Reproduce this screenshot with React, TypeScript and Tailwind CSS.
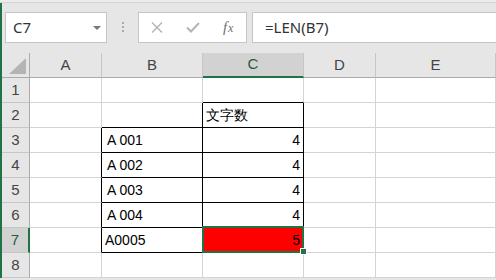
import React from 'react';

type Cell = { text?: string; align?: 'left' | 'right'; pad?: string; r?: boolean; b?: boolean; sel?: boolean };

// Rows 1..8, columns A..E
const rows: Cell[][] = [
  [{}, {}, { b: true }, {}, {}],
  [{}, { r: true, b: true }, { text: '文字数', r: true, b: true, pad: 'pl-[3px]' }, {}, {}],
  [{ r: true }, { text: 'A 001', r: true, b: true, pad: 'pl-[5px]' }, { text: '4', align: 'right', r: true, b: true }, {}, {}],
  [{ r: true }, { text: 'A 002', r: true, b: true, pad: 'pl-[5px]' }, { text: '4', align: 'right', r: true, b: true }, {}, {}],
  [{ r: true }, { text: 'A 003', r: true, b: true, pad: 'pl-[5px]' }, { text: '4', align: 'right', r: true, b: true }, {}, {}],
  [{ r: true }, { text: 'A 004', r: true, b: true, pad: 'pl-[5px]' }, { text: '4', align: 'right', r: true, b: true }, {}, {}],
  [{ r: true }, { text: 'A0005', r: true, b: true, pad: 'pl-[3px]' }, { text: '5', align: 'right', r: true, b: true, sel: true }, {}, {}],
  [{}, {}, {}, {}, {}],
];

const cols = ['A', 'B', 'C', 'D', 'E'];

function XIcon() {
  return (
    <svg width="12" height="11" viewBox="0 0 12 11">
      <path d="M1 0.5 L11 10.5 M11 0.5 L1 10.5" stroke="#b4b4b4" strokeWidth="1.4" fill="none" />
    </svg>
  );
}

function CheckIcon() {
  return (
    <svg width="14" height="11" viewBox="0 0 14 11">
      <path d="M1 5.5 L5 9.5 L13 1" stroke="#b4b4b4" strokeWidth="2" fill="none" />
    </svg>
  );
}

export default function App() {
  return (
    <div className="w-[496px] h-[280px] overflow-hidden bg-[#e6e6e6] font-['Liberation_Sans',sans-serif]">
      <div className="h-[3px] bg-[#ececec] border-b border-[#d4d4d4]" />
      <div className="border-l-2 border-[#217346]">
        {/* formula bar */}
        <div className="h-[50px] flex items-start pt-[9px]">
          <div className="ml-[3px] w-[102px] h-[31px] bg-white border border-[#c6c6c6] flex items-center justify-between pl-[7px] pr-[5px]">
            <span className="text-[15px] text-[#333] font-['Noto_Sans',sans-serif]">C7</span>
            <span className="w-0 h-0 border-l-[4px] border-r-[4px] border-t-[4px] border-l-transparent border-r-transparent border-t-[#777]" />
          </div>
          <div className="ml-[15px] mt-[10px] flex flex-col gap-[2px]">
            <span className="w-[2px] h-[2px] bg-[#aaa]" />
            <span className="w-[2px] h-[2px] bg-[#aaa]" />
            <span className="w-[2px] h-[2px] bg-[#aaa]" />
          </div>
          <div className="ml-[14px] w-[109px] h-[31px] bg-white border border-[#c6c6c6] flex items-center">
            <div className="w-[36px] flex justify-center"><XIcon /></div>
            <div className="w-[36px] flex justify-center"><CheckIcon /></div>
            <div className="w-[36px] flex justify-center">
              <span className="italic text-[15px] text-[#707070] font-['Liberation_Serif',serif] leading-none">f<span className="text-[12px] ml-[1px]">x</span></span>
            </div>
          </div>
          <div className="ml-[5px] flex-1 h-[31px] bg-white border border-r-0 border-[#c6c6c6] flex items-center pl-[12px]">
            <span className="text-[15px] text-[#333] font-['Noto_Sans',sans-serif]">=LEN(B7)</span>
          </div>
        </div>

        {/* sheet */}
        <div className="grid grid-cols-[28px_72px_101px_101px_72px_1fr] bg-white">
          {/* header row */}
          <div className="h-[25px] bg-[#e6e6e6] border-r border-b border-[#ababab] flex items-end justify-end pr-[3px] pb-[3px]">
            <svg width="17" height="16" viewBox="0 0 17 16">
              <polygon points="17,0 17,16 0,16" fill="#b4b4b4" />
            </svg>
          </div>
          {cols.map((c) =>
            c === 'C' ? (
              <div key={c} className="h-[25px] bg-[#d2d2d2] border-r border-[#c6c6c6] border-b-2 border-b-[#217346] flex items-center justify-center text-[15px] text-[#1f5e3b]">
                {c}
              </div>
            ) : (
              <div key={c} className="h-[25px] bg-[#e6e6e6] border-r border-[#c6c6c6] border-b border-b-[#ababab] flex items-center justify-center text-[15px] text-[#444]">
                {c}
              </div>
            )
          )}

          {rows.map((row, ri) => (
            <React.Fragment key={ri}>
              {ri === 6 ? (
                <div className="h-[25px] bg-[#d2d2d2] border-r-2 border-r-[#217346] border-b border-b-[#c6c6c6] flex items-center justify-center text-[15px] text-[#1f5e3b]">
                  {ri + 1}
                </div>
              ) : (
                <div className="h-[25px] bg-[#e6e6e6] border-r border-r-[#ababab] border-b border-b-[#c6c6c6] flex items-center justify-center text-[15px] text-[#444]">
                  {ri + 1}
                </div>
              )}
              {row.map((cell, ci) => (
                <div
                  key={ci}
                  className={
                    'h-[25px] border-r border-b flex items-center text-[14px] text-black font-[\'Noto_Sans_CJK_JP\',sans-serif] ' +
                    (cell.r ? 'border-r-black ' : 'border-r-[#d4d4d4] ') +
                    (cell.b ? 'border-b-black ' : 'border-b-[#d4d4d4] ') +
                    (cell.align === 'right' ? 'justify-end pr-[3px] ' : 'justify-start ') +
                    (cell.pad ?? '') +
                    (cell.sel ? ' relative bg-[#ff0000]' : '')
                  }
                >
                  {cell.text}
                  {cell.sel && (
                    <>
                      <div className="absolute z-10 -left-[1px] -top-[2px] -right-[1px] -bottom-[1px] border-2 border-[#217346]" />
                      <div className="absolute z-10 -right-[4px] -bottom-[3px] w-[7px] h-[7px] bg-[#217346] border border-white" />
                    </>
                  )}
                </div>
              ))}
            </React.Fragment>
          ))}
        </div>
      </div>
    </div>
  );
}
